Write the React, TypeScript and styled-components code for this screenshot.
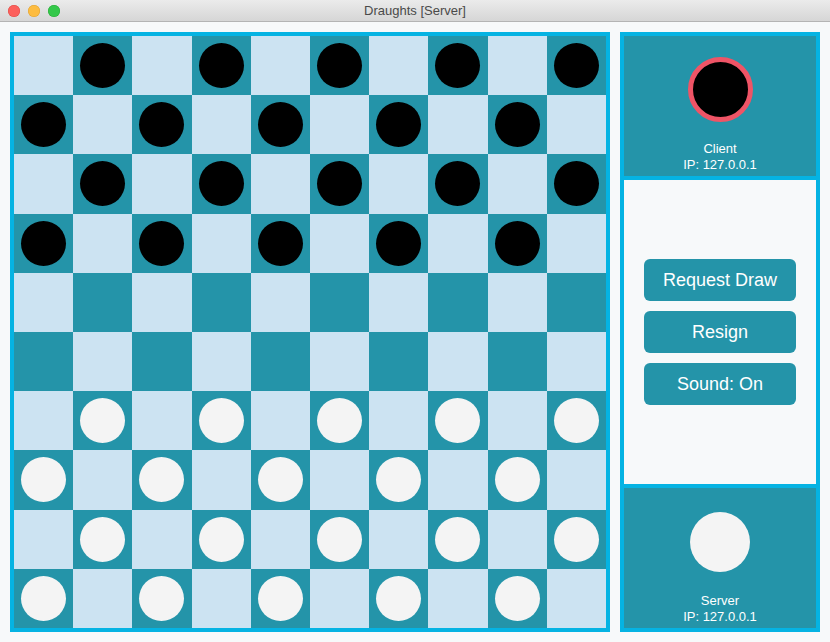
import React from "react";
import styled, { createGlobalStyle } from "styled-components";

const Global = createGlobalStyle`
  html, body { margin: 0; padding: 0; }
  body { width: 830px; height: 642px; overflow: hidden; background: #f7f9fa; font-family: "Liberation Sans", Arial, sans-serif; }
`;

const Window = styled.div`
  width: 830px;
  height: 642px;
  display: flex;
  flex-direction: column;
  background: #f7f9fa;
`;

const TitleBar = styled.div`
  height: 21px;
  flex: none;
  display: flex;
  align-items: center;
  position: relative;
  background: linear-gradient(#ebebeb, #d6d6d6);
  border-bottom: 1px solid #b4b4b4;
`;

const Lights = styled.div`
  display: flex;
  gap: 8px;
  padding-left: 8px;
`;

const Light = styled.span<{ $c: string; $b: string }>`
  width: 12px;
  height: 12px;
  border-radius: 50%;
  background: ${(p) => p.$c};
  box-shadow: inset 0 0 0 0.5px ${(p) => p.$b};
`;

const Title = styled.div`
  position: absolute;
  left: 0;
  right: 0;
  text-align: center;
  font-size: 13px;
  color: #4a4a4a;
  pointer-events: none;
`;

const Main = styled.div`
  flex: 1;
  display: flex;
  gap: 10px;
  padding: 10px;
`;

const Board = styled.div`
  width: 592px;
  height: 592px;
  border: 4px solid #05b3e3;
  display: grid;
  grid-template-columns: repeat(10, 1fr);
  grid-template-rows: repeat(10, 1fr);
  flex: none;
`;

const Square = styled.div<{ $dark: boolean }>`
  background: ${(p) => (p.$dark ? "#2494a9" : "#cce3f2")};
  display: flex;
  align-items: center;
  justify-content: center;
`;

const Piece = styled.div<{ $color: "black" | "white"; $size: number; $ring?: boolean }>`
  width: ${(p) => p.$size}px;
  height: ${(p) => p.$size}px;
  border-radius: 50%;
  box-sizing: border-box;
  background: ${(p) => (p.$color === "black" ? "#000" : "#f4f4f4")};
  border: ${(p) => (p.$ring ? "5px solid #ef5466" : "none")};
`;

const Side = styled.div`
  width: 192px;
  height: 592px;
  border: 4px solid #05b3e3;
  background: #05b3e3;
  display: flex;
  flex-direction: column;
  gap: 4px;
`;

const PlayerCard = styled.div`
  height: 140px;
  flex: none;
  background: #2494a9;
  display: flex;
  flex-direction: column;
  align-items: center;
  color: #fff;
  font-size: 13px;
  line-height: 16px;
  text-align: center;
`;

const PieceSlot = styled.div<{ $top: number }>`
  height: 105px;
  padding-top: ${(p) => p.$top}px;
  box-sizing: border-box;
  display: flex;
  justify-content: center;
`;

const Controls = styled.div`
  flex: 1;
  background: #f7f9fa;
  display: flex;
  flex-direction: column;
  align-items: center;
  justify-content: center;
  gap: 10px;
`;

const Button = styled.button`
  width: 152px;
  height: 42px;
  border: none;
  border-radius: 6px;
  background: #2494a9;
  color: #fff;
  font-family: "Liberation Sans", Arial, sans-serif;
  font-size: 18px;
  padding: 0;
  cursor: pointer;
`;

export default function App() {
  const squares = [];
  for (let r = 0; r < 10; r++) {
    for (let c = 0; c < 10; c++) {
      const dark = (r + c) % 2 === 1;
      let piece: "black" | "white" | null = null;
      if (dark && r < 4) piece = "black";
      if (dark && r > 5) piece = "white";
      squares.push(
        <Square key={`${r}-${c}`} $dark={dark}>
          {piece && <Piece $color={piece} $size={45} />}
        </Square>
      );
    }
  }
  return (
    <>
      <Global />
      <Window>
        <TitleBar>
          <Lights>
            <Light $c="#fc605c" $b="#de4a45" />
            <Light $c="#fdbc40" $b="#dea032" />
            <Light $c="#34c84a" $b="#27aa35" />
          </Lights>
          <Title>Draughts [Server]</Title>
        </TitleBar>
        <Main>
          <Board>{squares}</Board>
          <Side>
            <PlayerCard>
              <PieceSlot $top={21}>
                <Piece $color="black" $size={65} $ring />
              </PieceSlot>
              <div>Client</div>
              <div>IP: 127.0.0.1</div>
            </PlayerCard>
            <Controls>
              <Button>Request Draw</Button>
              <Button>Resign</Button>
              <Button>Sound: On</Button>
            </Controls>
            <PlayerCard>
              <PieceSlot $top={24}>
                <Piece $color="white" $size={60} />
              </PieceSlot>
              <div>Server</div>
              <div>IP: 127.0.0.1</div>
            </PlayerCard>
          </Side>
        </Main>
      </Window>
    </>
  );
}
